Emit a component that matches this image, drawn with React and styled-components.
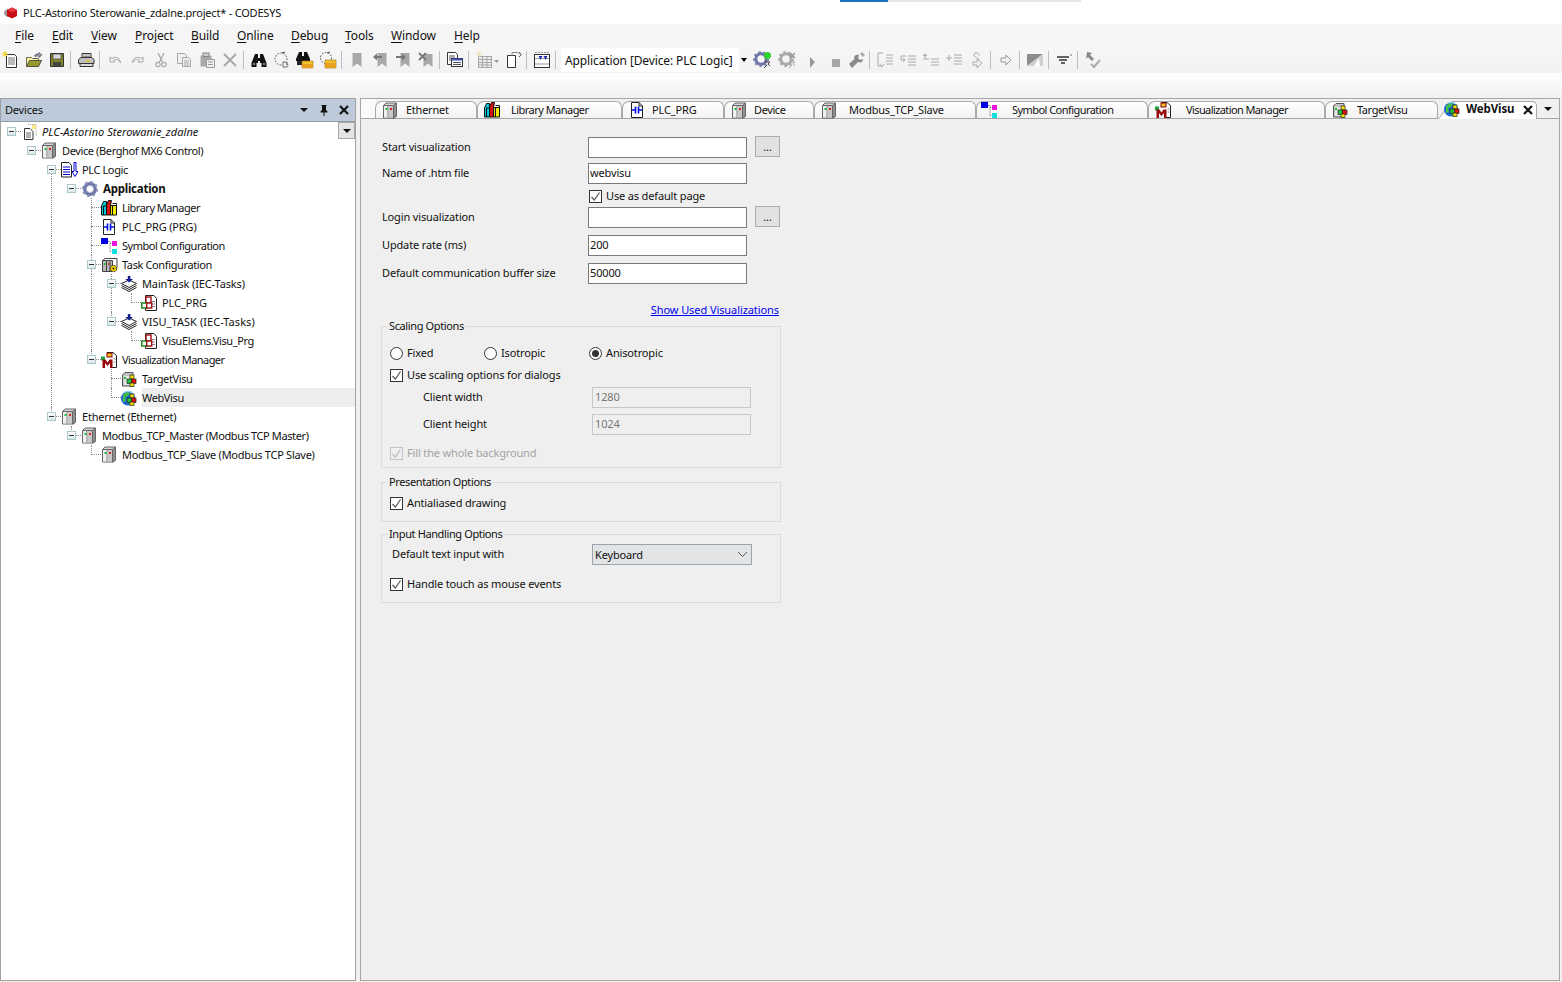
import React from "react";
import styled, { createGlobalStyle } from "styled-components";

const Global = createGlobalStyle`
  html, body { margin: 0; padding: 0; background: #f0f0f0; }
  * { box-sizing: border-box; }
  body { font-family: "Noto Sans", "Liberation Sans", sans-serif; font-size: 11px; letter-spacing: -0.15px; color: #111; }
`;

const Shell = styled.div`
  width: 1562px; height: 982px; display: flex; flex-direction: column; overflow: hidden; background: #f0f0f0; position: relative;
`;
const TitleBar = styled.div`
  height: 24px; background: #fff; display: flex; align-items: center; gap: 5px; padding: 1px 0 0 4px; font-size: 11px; letter-spacing: -0.2px; position: relative;
`;
const Progress = styled.div`
  position: absolute; left: 840px; top: 0; width: 241px; height: 2px; background: #e6e6e6;
  &::before { content: ""; display: block; width: 48px; height: 2px; background: #1a73c2; }
`;
const MenuBar = styled.div`
  height: 24px; background: #f5f5f5; display: flex; align-items: center; padding: 0 0 1px 15px; font-size: 12px; letter-spacing: -0.1px;
`;
const MenuItem = styled.span`
  width: ${p => p.$w}px;
  & u { text-underline-offset: 2px; }
`;
const ToolBar = styled.div`
  height: 25px; background: linear-gradient(#f6f6f6, #f2f2f2); display: flex; align-items: center; padding-bottom: 1px;
`;
const ToolCell = styled.span`
  width: ${p => p.$w || 23}px; height: 22px; display: flex; align-items: center; justify-content: center; flex: none;
`;
const ToolSep = styled.span`
  width: 1px; height: 18px; background: #bdbdbd; margin: 0 3px 0 2px; flex: none;
`;
const Combo = styled.div`
  width: 189px; height: 24px; margin-left: 2px; display: flex; align-items: center; flex: none; font-size: 12px; letter-spacing: -0.12px; background: #fff; padding-left: 4px; position: relative;
  &::after { content: ""; position: absolute; right: 0; top: 0; width: 11px; height: 24px; background: #f4f4f4; }
`;
const ComboArrow = styled.span`
  position: absolute; right: 3px; top: 10px; z-index: 1; border: 3px solid transparent; border-top: 4px solid #000; border-bottom: 0; width: 0; height: 0;
`;
const Spacer = styled.div`
  height: 25px; background: linear-gradient(#fff, #f1f1f1);
`;
const Main = styled.div`
  height: 884px; display: flex; gap: 4px; padding-bottom: 1px;
`;
const Devices = styled.section`
  width: 356px; flex: none; display: flex; flex-direction: column; background: #fff; border: 1px solid #a0a0a0;
`;
const PanelHead = styled.header`
  height: 23px; flex: none; background: #bccad9; border-bottom: 1px solid #8f9aa5; display: flex; align-items: center; padding: 0 0 1px 4px; letter-spacing: -0.2px;
`;
const PanelTitle = styled.span` flex: 1; `;
const HeadBtn = styled.span`
  width: 20px; display: flex; justify-content: center; align-items: center; margin-right: ${p => p.$r || 0}px;
`;
const Tree = styled.div` flex: 1; position: relative; `;
const TreeMenu = styled.span`
  position: absolute; right: 0; top: 0; width: 17px; height: 17px; background: #e4e4e4; border: 1px solid #a8a8a8; display: flex; align-items: center; justify-content: center;
`;
const DownTri = styled.span`
  width: 0; height: 0; border-left: 4px solid transparent; border-right: 4px solid transparent; border-top: 4px solid #111;
`;
const Row = styled.div` height: 19px; display: flex; align-items: stretch; `;
const Indent = styled.span`
  width: 20px; flex: none; position: relative;
  ${p => p.$line && `&::before { content: ""; position: absolute; left: 10px; top: 0; bottom: 0; border-left: 1px dotted #8a8a8a; }`}
`;
const Joint = styled.span`
  width: 20px; flex: none; position: relative;
  &::after { content: ""; position: absolute; left: 10px; right: 0; top: 9px; border-top: 1px dotted #8a8a8a; }
  ${p => (p.$up || p.$down) && `&::before { content: ""; position: absolute; left: 10px; top: ${p.$up ? 0 : 9}px; bottom: ${p.$down ? 0 : 9}px; border-left: 1px dotted #8a8a8a; }`}
`;
const Expander = styled.span`
  position: absolute; left: 6px; top: 5px; width: 9px; height: 9px; z-index: 1; border: 1px solid #a9c8cc; background: linear-gradient(#fff, #dde6e8); display: flex; align-items: center; justify-content: center;
  &::before { content: ""; width: 5px; height: 1px; background: #333; }
`;
const NodeIcon = styled.span`
  width: 21px; flex: none; display: flex; align-items: center; background: #fff; z-index: 1;
`;
const NodeLabel = styled.span`
  flex: 1; display: flex; align-items: center; white-space: nowrap; letter-spacing: ${p => p.$ls ?? -0.38}px;
  ${p => p.$bold && "font-weight: 700; font-size: 11.5px; letter-spacing: -0.25px; padding-left: 1px;"}
  ${p => p.$italic && "font-style: italic;"}
  ${p => p.$sel && "background: #eee;"}
`;
const Editor = styled.section`
  flex: 1; margin-right: 2px; display: flex; flex-direction: column; min-width: 0;
`;
const TabStrip = styled.div`
  height: 21px; flex: none; border: 1px solid #a6a6a6; display: flex; padding: 2px 0 0 14px; background: linear-gradient(90deg, #fafafa, #fafafa 15px, #f0f0f0 15px);
`;
const Tab = styled.div`
  width: ${p => p.$w}px; flex: none; height: 17px; display: flex; align-items: center; padding-left: ${p => p.$pad || 6}px;
  background: linear-gradient(#fff, #f2f2f2); border: 1px solid #a9a9a9; border-bottom: 0; border-radius: 7px 6px 0 0;
`;
const ActiveTab = styled.div`
  width: 99px; flex: none; height: 17px; display: flex; align-items: center; font-size: 11.5px; font-weight: 700; letter-spacing: -0.1px; position: relative; padding-left: 6px;
  &::before { content: ""; position: absolute; left: 0; top: 0; bottom: -1px; width: 30px; background: #fff; border-left: 1px solid #a9a9a9; border-top: 1px solid #a9a9a9; transform: skewX(-38deg); transform-origin: bottom left; }
  &::after { content: ""; position: absolute; left: 14px; right: 0; top: 0; bottom: -1px; background: #fff; border-top: 1px solid #a9a9a9; border-right: 1px solid #a9a9a9; border-top-right-radius: 5px; }
`;
const TabInner = styled.span` position: relative; z-index: 1; display: flex; align-items: center; width: 100%; padding-bottom: 1px; `;
const TabLabel = styled.span` margin-left: ${p => p.$gap}px; white-space: nowrap; padding-bottom: 1px; letter-spacing: ${p => p.$ls ?? -0.1}px; `;
const TabClose = styled.span` margin: 1px 4px 0 auto; display: flex; `;
const TabMenu = styled.span` flex: 1; display: flex; align-items: center; justify-content: center; padding-bottom: 1px; `;
const Content = styled.div`
  flex: 1; background: #efefef; border: 1px solid #a6a6a6; border-top: 0; padding: 17px 0 0 21px;
`;
const Form = styled.div` width: 400px; display: flex; flex-direction: column; `;
const FormRow = styled.div`
  display: grid; grid-template-columns: 206px 159px 8px 26px; align-items: center; height: ${p => p.$h}px; margin-top: ${p => p.$mt || 0}px;
`;
const FormLabel = styled.span` padding-bottom: ${p => p.$pb ?? 3}px; `;
const Input = styled.span`
  grid-column: 2; height: 21px; background: #fff; border: 1px solid #7a7a7a; display: flex; align-items: center; padding: 0 0 3px 1px; align-self: end;
`;
const Browse = styled.span`
  grid-column: 4; width: 25px; height: 21px; background: #e1e1e1; border: 1px solid #adadad; display: flex; align-items: center; justify-content: center; align-self: start; line-height: 1;
`;
const CheckRow = styled.label`
  display: flex; align-items: center; gap: 4px; height: 16px; margin-top: ${p => p.$mt || 0}px; ${p => p.$dim && "color: #a3a3a3;"}
`;
const OptionText = styled.span` padding-bottom: 2px; `;
const InlineCheck = styled(CheckRow)` grid-column: 2 / 5; margin-left: 1px; `;
const Box = styled.span`
  width: 13px; height: 13px; background: #fff; border: 1px solid ${p => p.$dim ? "#c4c4c4" : "#333"}; flex: none; display: flex; align-items: center; justify-content: center; ${p => p.$dim && "background: #efefef;"}
`;
const LinkRow = styled.div` height: 16px; margin-top: 18px; width: 397px; text-align: right; line-height: 15px; letter-spacing: -0.08px; `;
const Link = styled.a` color: #0000f0; text-decoration: underline; `;
const Group = styled.div`
  width: 400px; margin-left: -1px; margin-top: ${p => p.$mt}px; padding: ${p => p.$pt}px 0 ${p => p.$pb}px 8px; border: 1px solid #dcdcdc; position: relative;
`;
const Legend = styled.span`
  position: absolute; left: 6px; top: -9px; height: 15px; line-height: 15px; background: #efefef; padding: 0 1px; white-space: nowrap; letter-spacing: -0.38px;
`;
const RadioRow = styled.div` display: grid; grid-template-columns: 94px 105px 1fr; height: 16px; align-items: center; `;
const RadioCell = styled.label` display: flex; align-items: center; gap: 4px; `;
const Radio = styled.span`
  width: 13px; height: 13px; border-radius: 50%; border: 1px solid #333; background: #fff; display: flex; align-items: center; justify-content: center; flex: none;
  ${p => p.$on && `&::before { content: ""; width: 7px; height: 7px; background: #333; border-radius: 50%; }`}
`;
const ClientRow = styled.div` display: grid; grid-template-columns: 202px 159px; height: 21px; margin-top: ${p => p.$mt}px; align-items: center; `;
const ClientLabel = styled.span` padding: 0 0 3px ${p => p.$in}px; `;
const ReadOnly = styled.span`
  height: 21px; border: 1px solid #c8c8c8; background: #efefef; color: #777; display: flex; align-items: center; padding: 0 0 3px 2px;
`;
const SelectBox = styled.span`
  width: 160px; height: 21px; border: 1px solid #9aa3aa; background: #e2e4e6; display: flex; align-items: center; justify-content: space-between; padding: 0 3px 0 2px;
`;

const Svg = ({ children, s = 16, w, h }) => <svg width={w || s} height={h || s} viewBox={`0 0 ${w || s} ${h || s}`} style={{ display: "block", flex: "none" }}>{children}</svg>;

/* project tree and tab icons */
const DeviceIco = () => <Svg h={17}><path d="M1.500 3.500L4 1h10.500v13L12.500 16H1.500z" fill="#d6d6d6" stroke="#666" /><path d="M2 4h3v11.500H2z" fill="#f0f0f0"/><path d="M5 4h6.500v11.500H5z" fill="#c8c8c8"/><path d="M11.500 3.500V16L14.500 14V1z" fill="#909090" stroke="#666"/><path d="M1.500 3.500H11.500" stroke="#666"/><path d="M6 4v11.500" stroke="#aaa"/><rect x="3.500" y="6" width="2" height="2" fill="#10c030"/><rect x="8" y="6" width="2" height="2" fill="#e02020"/></Svg>;
const LibIco = () => <Svg><path d="M.5 6l2-4.500h3V15h-5z" fill="#00c8d8" stroke="#111"/><path d="M2.500 6h3M2.500 6V15" stroke="#111"/><path d="M5.500 5l2-4.500h3L9.500 5V15h-4z" fill="#d81010" stroke="#111"/><path d="M9.500 5.500h6V15h-6z" fill="#f4ec00" stroke="#111"/><path d="M11.500 3.500h4v2M11.500 5.500V15" fill="none" stroke="#111"/></Svg>;
const Doc = ({ fill = "#fff" }) => <><path d="M2.500.5H10L13.500 4v11.500H2.500z" fill={fill} stroke="#222"/><path d="M10 .5V4h3.500" fill="none" stroke="#222"/></>;
const PouIco = () => <Svg><Doc/><path d="M3 8h3M10 8h3M6.500 4.500v7M9.500 4.500v7" stroke="#0010e0" strokeWidth="1.600"/></Svg>;
const SymIco = () => <Svg><rect x="0" y="0" width="7" height="6" fill="#0000e8"/><rect x="11" y="3" width="5" height="5" fill="#f010e0"/><rect x="11" y="11" width="5" height="5" fill="#10e0e0"/><path d="M7 3.500h2v10h2M9 5.500h2" stroke="#666" strokeDasharray="1 1" fill="none"/></Svg>;
const TaskCfgIco = () => <Svg w={18} h={16}><path d="M1.500 3.500h10v11h-10z" fill="#b8b8b8" stroke="#444"/><path d="M5.500 3.500v11M9 3.500v11M1.500 3.500L4 1.500H16v9" fill="none" stroke="#444"/><rect x="3" y="6" width="1.500" height="2" fill="#10c030"/><rect x="7" y="6" width="1.500" height="2" fill="#e02020"/><circle cx="12.500" cy="11.500" r="3.200" fill="#f4d000" stroke="#222" strokeDasharray="2 1"/><circle cx="12.500" cy="11.500" r="1" fill="#222"/></Svg>;
const TaskIco = () => <Svg><path d="M8 4L15.500 7.500 8 11.500.5 7.500z" fill="#fff" stroke="#222"/><path d="M.5 9.500l7.500 4 7.500-4M.5 11.500l7.500 4 7.500-4" fill="none" stroke="#222"/><path d="M6.800 0h2.600v3H12L8.100 6.500 4.300 3h2.500z" fill="#102090"/></Svg>;
const PrgIco = () => <Svg><path d="M4.500.5H13l2.500 3v12h-11z" fill="#fff" stroke="#222"/><path d="M11 6.500h3M11 9h3M11 11.500h3" stroke="#888"/><rect x="5" y="2" width="5" height="6" fill="#fff" stroke="#a01010" strokeWidth="1.400"/><rect x=".8" y="8" width="5" height="5" fill="#fff" stroke="#108010" strokeWidth="1.400"/><rect x="5.700" y="8" width="5" height="5" fill="#fff" stroke="#a01010" strokeWidth="1.400"/></Svg>;
const VisuMgrIco = () => <Svg><path d="M6 .5h6l3.500 3v12h-5" fill="#fff" stroke="#222"/><path d="M12.500 7h2M12.500 10h2" stroke="#888"/><rect x="6" y="1" width="5" height="4" fill="#f2c020" stroke="#800000"/><rect x="0" y="4.500" width="4" height="4" fill="#20a040"/><path d="M1.500 16V7.500h3l2 3 2-3h3V16H9v-5l-2.500 3-2.500-3v5z" fill="#980808"/></Svg>;
const Squares = () => <><rect x="9" y="4" width="4" height="4" fill="#f2e000" stroke="#222" strokeWidth=".7"/><rect x="6" y="8" width="4.500" height="4.500" fill="#20c040" stroke="#222" strokeWidth=".7"/><rect x="10.500" y="8" width="4.500" height="4.500" fill="#e01010" stroke="#222" strokeWidth=".7"/><rect x="9" y="12" width="4" height="3.500" fill="#f2e000" stroke="#222" strokeWidth=".7"/></>;
const TargetIco = () => <Svg><path d="M1.500 4L4 1.500h8V15H1.500z" fill="#c4c4c4" stroke="#555"/><path d="M3 5h7v9H3z" fill="#e6e6e6"/><rect x="3" y="6" width="2" height="2" fill="#10c030"/><Squares/></Svg>;
const WebIco = () => <Svg><circle cx="7" cy="8.500" r="7" fill="#1c66d8"/><path d="M2 5l4-3 3 1-2 3-3 1 1 4-3 1zM8 9l3 2-2 4-2-2z" fill="#46c040"/><path d="M3 2q4-3 9 0l-2 1q-3-2-6 0z" fill="#8fd8f0"/><Squares/></Svg>;
const GearIco = () => <Svg w={18} h={18}><circle cx="9" cy="9" r="5.200" fill="none" stroke="#6d76a8" strokeWidth="3.400"/><circle cx="9" cy="9" r="7" fill="none" stroke="#8f96bc" strokeWidth="2.200" strokeDasharray="2.800 2.700"/><circle cx="9" cy="9" r="2.600" fill="#fff"/><circle cx="9" cy="9" r="3.600" fill="none" stroke="#b4b8d4"/></Svg>;
const LogicIco = () => <Svg w={17} h={16}><path d="M.5.5H8l2.500 3V15H.5z" fill="#fff" stroke="#222"/><path d="M2 5h7M2 7.500h7M2 10h7M2 12.500h7" stroke="#0000d0"/><path d="M13 .5h2v9h2l-3 5-3-5h2z" fill="#fff" stroke="#0000d0"/></Svg>;
const RootIco = () => <Svg><path d="M3.500 4.500H9l3 3V15.500H3.500z" fill="#fff" stroke="#333"/><path d="M5 9h5M5 11h5M5 13h5" stroke="#666"/><path d="M7 .5h8v11" fill="none" stroke="#999" strokeDasharray="1 1"/><rect x="11" y="1" width="4" height="4" fill="#f8e880"/></Svg>;

/* toolbar icons */
const Dim = "#a8a8a8";
const T = {
  neu: <Svg w={18} h={18}><path d="M4.500 3.500h8l2 2v11h-10z" fill="#fff" stroke="#333"/><path d="M6 7h7M6 9h7M6 11h7M6 13h7" stroke="#777"/><path d="M3 0v6M0 3h6M1 1l4 4M5 1L1 5" stroke="#f0d020"/></Svg>,
  open: <Svg w={18} h={16}><path d="M1.500 5.500h5l1 1h6v8h-12z" fill="#fff3a0" stroke="#665"/><path d="M1.500 14.500l3-6h12l-3 6z" fill="#98982c" stroke="#554"/><path d="M9 4q2-3 5-2v-1.500l3 2.500-3 2.500V4q-3-.5-4 1" fill="#99a" stroke="#445" strokeWidth=".6"/></Svg>,
  save: <Svg><path d="M1.500 1.500h13v13h-13z" fill="#82822c" stroke="#333"/><rect x="4" y="2" width="8" height="5" fill="#d8d8d8" stroke="#333" strokeWidth=".6"/><rect x="4" y="10" width="8" height="4.500" fill="#444"/></Svg>,
  print: <Svg w={18} h={16}><path d="M5 1.500h9v5H5z" fill="#fff" stroke="#333"/><path d="M6 3h7M6 4.500h7" stroke="#888"/><path d="M1.500 7.500L4 5.500h11l2 2v4H1.500z" fill="#c0c0c0" stroke="#333"/><path d="M3 11.500h13v3H3z" fill="#d8d8d8" stroke="#333"/><path d="M9 9h4" stroke="#e0c010" strokeWidth="1.500"/></Svg>,
  undo: <Svg><path d="M3 5v5h5L6.500 8.400C9 6.500 12 8 13.500 11 13.500 7 9.500 3.500 5 6.500z" fill="none" stroke={Dim}/></Svg>,
  redo: <Svg><path d="M13 5v5H8l1.500-1.600C7 6.500 4 8 2.500 11 2.500 7 6.500 3.500 11 6.500z" fill="none" stroke={Dim}/></Svg>,
  cut: <Svg><path d="M5 1l4.500 9M11 1L6.500 10" stroke={Dim} strokeWidth="1.300"/><circle cx="5" cy="12.500" r="2.200" fill="none" stroke={Dim} strokeWidth="1.200"/><circle cx="11" cy="12.500" r="2.200" fill="none" stroke={Dim} strokeWidth="1.200"/></Svg>,
  copy: <Svg><path d="M1.500 1.500h7l2 2v8h-9z" fill="#efefef" stroke={Dim}/><path d="M6.500 5.500h6l2 2v7h-8z" fill="#efefef" stroke={Dim}/><path d="M8 9h5M8 11h5M8 13h5" stroke={Dim}/></Svg>,
  paste: <Svg><path d="M1.500 3.500h11v11h-11z" fill={Dim}/><rect x="4" y="1" width="6" height="3.500" fill="#ccc" stroke="#888"/><path d="M7.500 7.500h8v8h-8z" fill="#efefef" stroke="#999"/><path d="M9 10h5M9 12.500h5" stroke="#999"/></Svg>,
  del: <Svg><path d="M2 2l12 12M14 2L2 14" stroke={Dim} strokeWidth="2"/></Svg>,
  bino: <Svg><path d="M4 2h3v4H9V2h3l3.500 9v4h-5v-4H9V9H7v2H5.500v4h-5v-4z" fill="#111"/><circle cx="3" cy="12" r="1.300" fill="#777"/><circle cx="13" cy="12" r="1.300" fill="#777"/></Svg>,
  repl: <Svg w={18} h={18}><circle cx="8" cy="8" r="6" fill="none" stroke="#444" strokeDasharray="1.500 1.500"/><path d="M9 2l3-1M14 13l3 2" stroke="#444"/><rect x="9" y="9" width="8" height="8" fill="#f5f5f5"/><path d="M10 11v5h3q2 0 2-1.500T13 13q1.500 0 1.500-1T13 11z" fill="none" stroke="#666"/></Svg>,
  binoF: <Svg w={18} h={18}><path d="M3 1h3v4h2V1h3l3 7v2H0V8z" fill="#111"/><path d="M1 10h5v4H1zM8 10h3v1H8z" fill="#222"/><path d="M6 10h11v7H6z" fill="#f0c030" stroke="#b07010" strokeWidth=".6"/><path d="M6 13h11v4H6z" fill="#e8a020"/></Svg>,
  replF: <Svg w={18} h={18}><circle cx="7" cy="7" r="5.500" fill="none" stroke="#444" strokeDasharray="1.500 1.500"/><path d="M8 2l3-1" stroke="#444"/><path d="M6 9h11v8H6z" fill="#f0c030" stroke="#a07010" strokeWidth=".6"/><path d="M6 12h11v5H6z" fill="#e8a020"/></Svg>,
  mark: <Svg><path d="M3.500 1h9v14L8 11.500 3.500 15z" fill={Dim}/></Svg>,
  markL: <Svg><path d="M5.500 1h9v14L10 11.500 5.500 15z" fill={Dim}/><path d="M1 5l4-3.500V4h5v2H5v2.500z" fill="#777"/></Svg>,
  markR: <Svg><path d="M5.500 1h9v14L10 11.500 5.500 15z" fill={Dim}/><path d="M11 5L7 1.500V4H1v2h6v2.500z" fill="#777"/></Svg>,
  markX: <Svg><path d="M5.500 2h9v13L10 11.500 5.500 15z" fill={Dim}/><path d="M1 1l7 7M8 1L1 8" stroke="#777" strokeWidth="1.800"/></Svg>,
  win: <Svg w={18} h={18}><path d="M1.500 1.500h8l2 2v10h-10z" fill="#fff" stroke="#333"/><path d="M3 5h6M3 7h6M3 9h6" stroke="#555"/><rect x="5.500" y="7.500" width="11" height="8" fill="#fff" stroke="#333"/><path d="M5.500 7.500h11v2h-11z" fill="#4050c0"/><path d="M7 11.500h8M7 13.500h8" stroke="#555"/></Svg>,
  grid: <Svg w={24} h={18}><rect x="2.500" y="5.500" width="13" height="11" fill="#ededed" stroke={Dim}/><path d="M2.500 8.500h13M2.500 11.500h13M2.500 14h13M6.500 6v10M11 6v10" stroke={Dim}/><path d="M3 0v6M0 3h6" stroke="#e8e0a0"/><path d="M18 9l5 0-2.500 3z" fill="#999"/></Svg>,
  newDoc: <Svg w={18} h={18}><path d="M2.500 4.500h8v12h-8z" fill="#fff" stroke="#333"/><path d="M7 5V1.500h6l2 2" fill="none" stroke="#888"/><path d="M14 1l2.500 2.500L14 6" fill="none" stroke="#555"/></Svg>,
  cal: <Svg w={18} h={18}><rect x="1.500" y="3.500" width="15" height="13" fill="#fff" stroke="#333"/><path d="M1.500 7.500h15M1.500 13h15" stroke="#333" strokeDasharray="1 1"/><path d="M3 1v4M6 1v4M9 1v4M12 1v4M15 1v4" stroke="#333" strokeDasharray="1 1"/><path d="M5.500 5l2 4 2-4zM10.500 5l2 4 2-4z" fill="#2030b0"/></Svg>,
  gearOn: <Svg w={20} h={18}><circle cx="8" cy="8" r="5.200" fill="none" stroke="#6a72a6" strokeWidth="3"/><circle cx="8" cy="8" r="7" fill="none" stroke="#8189b2" strokeWidth="2" strokeDasharray="2.500 2.500"/><circle cx="14.500" cy="4.500" r="3.500" fill="#30d030"/><path d="M12 11h5l-2 2 2 2M11 17l3-3" stroke="#444" fill="none"/></Svg>,
  gearOff: <Svg w={20} h={18}><circle cx="8" cy="8" r="5.200" fill="none" stroke="#aaa" strokeWidth="3"/><circle cx="8" cy="8" r="7" fill="none" stroke="#aaa" strokeWidth="2" strokeDasharray="2.500 2.500"/><path d="M12 2l5 5M17 2l-5 5" stroke="#999" strokeWidth="1.500"/><path d="M12 11h5l-2 2 2 2M11 17l3-3" stroke="#aaa" fill="none"/></Svg>,
  play: <Svg><path d="M6 5l5 5-5 6z" fill="#999"/></Svg>,
  stop: <Svg><rect x="4" y="7" width="8" height="8" fill="#a6a6a6"/></Svg>,
  wrench: <Svg w={18} h={18}><path d="M1 13l3 4 6-6c3 1 5 0 5-3l-3 1-2-2 1-3C7 3 5.500 6 6.500 8z" fill="#8a8a8a"/><path d="M14 1l3 3-2 2-3-3z" fill="#aaa"/></Svg>,
  s1: <Svg w={18} h={18}><path d="M7 2H2v13h3M4 13l2 3 2-3M10 4h7M10 7h7M10 10h7M10 13h7" fill="none" stroke="#aaa"/></Svg>,
  s2: <Svg w={18} h={18}><path d="M9 5h8M9 8h8M9 11h8M9 14h8" stroke="#aaa"/><path d="M7 5H2v4h4M4 7l2 2-2 2" fill="none" stroke="#aaa"/></Svg>,
  s3: <Svg w={18} h={18}><path d="M9 8h8M9 11h8M9 14h8M1 8h6" stroke="#aaa"/><path d="M3 7V3L1 5M3 3l2 2" fill="none" stroke="#999"/></Svg>,
  s4: <Svg w={18} h={18}><path d="M9 4h8M9 7h8M9 10h8M9 13h8M1 7h6M4 4v6" stroke="#aaa"/></Svg>,
  s5: <Svg w={18} h={18}><path d="M11 4.500C11 1 6 1 6 4c0 3 5 2 5 5v0" fill="none" stroke="#aaa"/><path d="M5 11h4V8l5 4-5 5v-3H5z" fill="#f2f2f2" stroke="#aaa"/></Svg>,
  next: <Svg><path d="M3 6h5V3l5 5-5 5v-3H3z" fill="#f2f2f2" stroke="#999"/></Svg>,
  force: <Svg w={18} h={18}><path d="M1 3h16L1 15z" fill="#8c8c8c"/><path d="M17 3v12H1z" fill="#cfcfcf"/><path d="M8 15l5-8 1 8z" fill="#fff"/></Svg>,
  filter: <Svg w={18} h={18}><path d="M2 6h12M4 9h8M6 12h4" stroke="#333" strokeWidth="1.400"/><path d="M15 4h2" stroke="#777"/></Svg>,
  check: <Svg w={18} h={18}><path d="M3 1l-1 7 2-2 4 4 2-2-4-4 2-2z" fill="#888"/><path d="M7 13l3 3 6-7" fill="none" stroke="#aaa" strokeWidth="2"/></Svg>,
  pin: <Svg w={10} h={12}><path d="M2.500 1h5v1H7v4l1.500 1.500v1h-3V12h-1V8.500h-3v-1L3 6V2h-.5z" fill="#111"/></Svg>,
  cross: <Svg w={10} h={10}><path d="M1 1l8 8M9 1L1 9" stroke="#111" strokeWidth="2.200"/></Svg>,
  tick: <Svg w={11} h={11}><path d="M1.500 6l2.800 3L9.500 1.500" fill="none" stroke="#555" strokeWidth="1.200"/></Svg>,
  tickDim: <Svg w={11} h={11}><path d="M1.500 6l2.800 3L9.500 1.500" fill="none" stroke="#bbb" strokeWidth="1.200"/></Svg>,
  chevron: <Svg w={11} h={7}><path d="M1 1l4.500 4.500L10 1" fill="none" stroke="#555" /></Svg>,
  app: <Svg w={14} h={14}><ellipse cx="5" cy="7" rx="5" ry="4" fill="#9a9a9a"/><path d="M8 1.500l5 2.500v6l-5 2.500-5-2.500V4z" fill="#c80f14"/><path d="M8 1.500l5 2.500-5 2.500L3 4z" fill="#e23a3e"/></Svg>,
};

const LeftTools = [
  ["neu", 22], ["open"], ["save"], "|", ["print"], "|", ["undo"], ["redo"], ["cut"], ["copy"], ["paste"], ["del"], "|",
  ["bino"], ["repl"], ["binoF"], ["replF"], "|", ["mark"], ["markL"], ["markR"], ["markX"], "|", ["win"], "|", ["grid", 32], ["newDoc", 20], "|", ["cal"], "|",
];
const RightTools = [
  ["gearOn", 26], ["gearOff"], ["play", 26], ["stop", 21], ["wrench", 21], "|", ["s1"], ["s2"], ["s3"], ["s4"], ["s5"], "|", ["next"], "|", ["force"], "|", ["filter"], "|", ["check"],
];
const renderTools = list => list.map((t, i) => t === "|" ? <ToolSep key={i} /> : <ToolCell key={i} $w={t[1]}>{T[t[0]]}</ToolCell>);

const menus = [["F", "ile", 37], ["E", "dit", 39], ["V", "iew", 44], ["P", "roject", 56], ["B", "uild", 46], ["O", "nline", 54], ["D", "ebug", 54], ["T", "ools", 46], ["W", "indow", 63], ["H", "elp", 40]];

const tree = [
  { l: 0, t: "PLC-Astorino Sterowanie_zdalne", i: <RootIco />, exp: 1, italic: 1, ls: 0.05 },
  { l: 1, t: "Device (Berghof MX6 Control)", i: <DeviceIco />, exp: 1 },
  { l: 2, t: "PLC Logic", i: <LogicIco />, exp: 1, down: 1 },
  { l: 3, g: [2], t: "Application", i: <GearIco />, exp: 1, bold: 1 },
  { l: 4, g: [2], t: "Library Manager", i: <LibIco />, up: 1, down: 1, ls: -0.5 },
  { l: 4, g: [2], t: "PLC_PRG (PRG)", i: <PouIco />, up: 1, down: 1, ls: -0.15 },
  { l: 4, g: [2], t: "Symbol Configuration", i: <SymIco />, up: 1, down: 1, ls: -0.48 },
  { l: 4, g: [2], t: "Task Configuration", i: <TaskCfgIco />, exp: 1, up: 1, down: 1 },
  { l: 5, g: [2, 4], t: "MainTask (IEC-Tasks)", i: <TaskIco />, exp: 1, up: 1, down: 1, ls: -0.13 },
  { l: 6, g: [2, 4, 5], t: "PLC_PRG", i: <PrgIco />, up: 1, ls: -0.1 },
  { l: 5, g: [2, 4], t: "VISU_TASK (IEC-Tasks)", i: <TaskIco />, exp: 1, up: 1, ls: 0.05 },
  { l: 6, g: [2, 4], t: "VisuElems.Visu_Prg", i: <PrgIco />, up: 1 },
  { l: 4, g: [2], t: "Visualization Manager", i: <VisuMgrIco />, exp: 1, up: 1, ls: -0.57 },
  { l: 5, g: [2], t: "TargetVisu", i: <TargetIco />, up: 1, down: 1 },
  { l: 5, g: [2], t: "WebVisu", i: <WebIco />, up: 1, sel: 1 },
  { l: 2, t: "Ethernet (Ethernet)", i: <DeviceIco />, exp: 1, up: 1, ls: -0.23 },
  { l: 3, t: "Modbus_TCP_Master (Modbus TCP Master)", i: <DeviceIco />, exp: 1, up: 1 },
  { l: 4, t: "Modbus_TCP_Slave (Modbus TCP Slave)", i: <DeviceIco />, up: 1, ls: -0.27 },
];

const tabs = [
  { t: "Ethernet", w: 102, i: <DeviceIco />, gap: 8, pad: 6, ls: -0.25 },
  { t: "Library Manager", w: 145, i: <LibIco />, gap: 11, ls: -0.53 },
  { t: "PLC_PRG", w: 102, i: <PouIco />, gap: 7, ls: -0.15 },
  { t: "Device", w: 90, i: <DeviceIco />, gap: 7, ls: -0.4 },
  { t: "Modbus_TCP_Slave", w: 162, i: <DeviceIco />, gap: 12, ls: -0.22 },
  { t: "Symbol Configuration", w: 172, i: <SymIco />, gap: 15, pad: 4, ls: -0.55 },
  { t: "Visualization Manager", w: 177, i: <VisuMgrIco />, gap: 15, ls: -0.6 },
  { t: "TargetVisu", w: 113, i: <TargetIco />, gap: 9, ls: -0.4 },
];

const Check = ({ dim }) => <Box $dim={dim}>{dim ? T.tickDim : T.tick}</Box>;

export default function App() {
  return (
    <Shell>
      <Global />
      <TitleBar>
        {T.app}
        <span>PLC-Astorino Sterowanie_zdalne.project* - CODESYS</span>
        <Progress />
      </TitleBar>
      <MenuBar>
        {menus.map(([a, b, w]) => <MenuItem key={a} $w={w}><u>{a}</u>{b}</MenuItem>)}
      </MenuBar>
      <ToolBar>
        {renderTools(LeftTools)}
        <Combo>Application [Device: PLC Logic]<ComboArrow /></Combo>
        {renderTools(RightTools)}
      </ToolBar>
      <Spacer />
      <Main>
        <Devices>
          <PanelHead>
            <PanelTitle>Devices</PanelTitle>
            <HeadBtn><DownTri /></HeadBtn>
            <HeadBtn>{T.pin}</HeadBtn>
            <HeadBtn $r={1}>{T.cross}</HeadBtn>
          </PanelHead>
          <Tree>
            <TreeMenu><DownTri /></TreeMenu>
            {tree.map((n, idx) => (
              <Row key={idx}>
                {Array.from({ length: n.l }, (_, k) => <Indent key={k} $line={n.g && n.g.includes(k)} />)}
                <Joint $up={n.up} $down={n.down}>{n.exp && <Expander />}</Joint>
                <NodeIcon>{n.i}</NodeIcon>
                <NodeLabel $bold={n.bold} $italic={n.italic} $sel={n.sel} $ls={n.ls}>{n.t}</NodeLabel>
              </Row>
            ))}
          </Tree>
        </Devices>
        <Editor>
          <TabStrip>
            {tabs.map(t => (
              <Tab key={t.t} $w={t.w} $pad={t.pad}>{t.i}<TabLabel $gap={t.gap} $ls={t.ls}>{t.t}</TabLabel></Tab>
            ))}
            <ActiveTab>
              <TabInner><WebIco /><TabLabel $gap={6}>WebVisu</TabLabel><TabClose>{T.cross}</TabClose></TabInner>
            </ActiveTab>
            <TabMenu><DownTri /></TabMenu>
          </TabStrip>
          <Content>
            <Form>
              <FormRow $h={22}><FormLabel $pb={1}>Start visualization</FormLabel><Input /><Browse>...</Browse></FormRow>
              <FormRow $h={21} $mt={5}><FormLabel>Name of .htm file</FormLabel><Input>webvisu</Input></FormRow>
              <FormRow $h={20} $mt={2}><InlineCheck><Check /><OptionText>Use as default page</OptionText></InlineCheck></FormRow>
              <FormRow $h={22}><FormLabel $pb={1}>Login visualization</FormLabel><Input /><Browse>...</Browse></FormRow>
              <FormRow $h={21} $mt={7}><FormLabel>Update rate (ms)</FormLabel><Input>200</Input></FormRow>
              <FormRow $h={21} $mt={7}><FormLabel>Default communication buffer size</FormLabel><Input>50000</Input></FormRow>
              <LinkRow><Link>Show Used Visualizations</Link></LinkRow>
              <Group $mt={8} $pt={18} $pb={6}>
                <Legend>Scaling Options</Legend>
                <RadioRow>
                  <RadioCell><Radio /><OptionText>Fixed</OptionText></RadioCell>
                  <RadioCell><Radio /><OptionText>Isotropic</OptionText></RadioCell>
                  <RadioCell><Radio $on /><OptionText>Anisotropic</OptionText></RadioCell>
                </RadioRow>
                <CheckRow $mt={6}><Check /><OptionText>Use scaling options for dialogs</OptionText></CheckRow>
                <ClientRow $mt={4}><ClientLabel $in={33}>Client width</ClientLabel><ReadOnly>1280</ReadOnly></ClientRow>
                <ClientRow $mt={6}><ClientLabel $in={33}>Client height</ClientLabel><ReadOnly>1024</ReadOnly></ClientRow>
                <CheckRow $mt={10} $dim><Check dim /><OptionText>Fill the whole background</OptionText></CheckRow>
              </Group>
              <Group $mt={14} $pt={12} $pb={10}>
                <Legend>Presentation Options</Legend>
                <CheckRow><Check /><OptionText>Antialiased drawing</OptionText></CheckRow>
              </Group>
              <Group $mt={12} $pt={9} $pb={10}>
                <Legend>Input Handling Options</Legend>
                <ClientRow $mt={0}><ClientLabel $in={2}>Default text input with</ClientLabel><SelectBox>Keyboard{T.chevron}</SelectBox></ClientRow>
                <CheckRow $mt={11}><Check /><OptionText>Handle touch as mouse events</OptionText></CheckRow>
              </Group>
            </Form>
          </Content>
        </Editor>
      </Main>
    </Shell>
  );
}
